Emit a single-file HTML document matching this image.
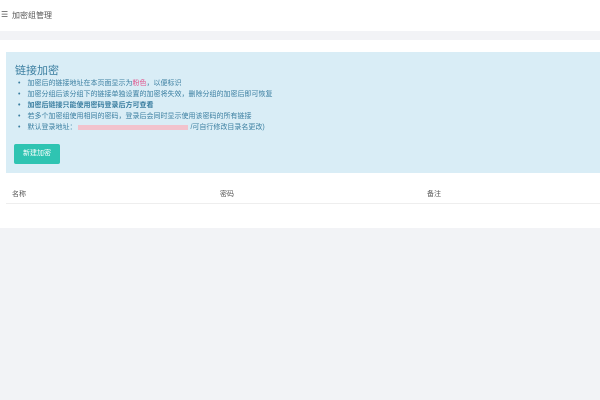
<!DOCTYPE html>
<html><head><meta charset="utf-8"><style>
*{margin:0;padding:0;box-sizing:border-box}
body{width:600px;height:400px;background:#f2f3f6;font-family:"Liberation Sans","Noto Sans CJK SC",sans-serif;position:relative;overflow:hidden}
.hdr{position:absolute;left:0;top:0;width:600px;height:31px;background:#fff;font-size:8px;color:#555}
.hdr span{position:absolute;top:10px}
.card{position:absolute;left:0;top:40px;width:600px;height:188px;background:#fff}
.info{position:absolute;left:6px;top:12px;width:594px;height:121px;background:#d9edf6;color:#3a7ea0}
.t{position:absolute;left:9px;top:10px;font-size:11px}
ul{position:absolute;left:12px;top:26px;list-style:none;font-size:7px;line-height:11px}
li:before{content:"•";margin-right:7px}
.b{font-weight:bold}
.red{display:inline-block;width:110px;height:5px;background:#f2c3cd;vertical-align:middle;margin:0 2px}
.btn{position:absolute;left:8px;top:92px;width:46px;height:20px;background:#2fc4b2;color:#fff;font-size:7px;line-height:20px;text-align:center;border-radius:2px}
.th{position:absolute;top:149px;font-size:7px;color:#555}
.line{position:absolute;left:6px;top:163px;width:594px;height:1px;background:#eee}
</style></head><body>
<div class="hdr"><span style="left:1px">☰</span><span style="left:12px">加密组管理</span></div>
<div class="card">
<div class="info">
<div class="t">链接加密</div>
<ul>
<li>加密后的链接地址在本页面显示为<span style="color:#e0508a">粉色</span>，以便标识</li>
<li>加密分组后该分组下的链接单独设置的加密将失效，删除分组的加密后即可恢复</li>
<li class="b">加密后链接只能使用密码登录后方可查看</li>
<li>若多个加密组使用相同的密码，登录后会同时显示使用该密码的所有链接</li>
<li>默认登录地址：<span class="red"></span>/可自行修改目录名更改)</li>
</ul>
<div class="btn">新建加密</div>
</div>
<div class="th" style="left:12px">名称</div>
<div class="th" style="left:220px">密码</div>
<div class="th" style="left:427px">备注</div>
<div class="line"></div>
</div>
</body></html>
